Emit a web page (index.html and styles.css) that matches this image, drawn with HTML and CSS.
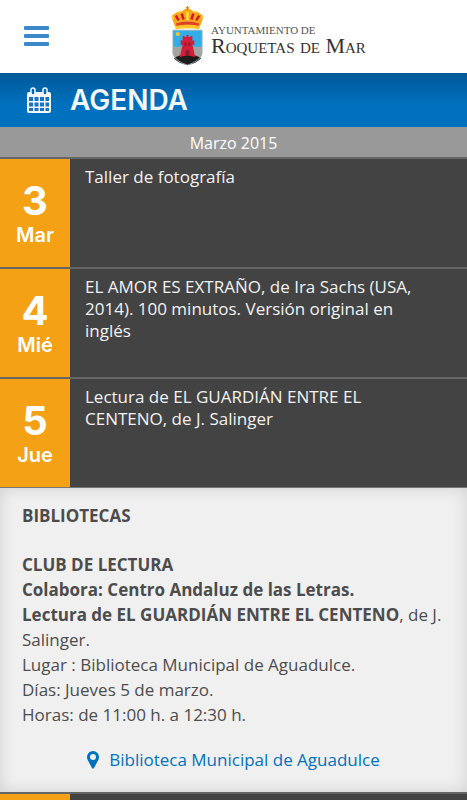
FILE: index.html
```html
<!DOCTYPE html>
<html lang="es">
<head>
<meta charset="utf-8">
<meta name="viewport" content="width=device-width, initial-scale=1">
<title>Agenda - Ayuntamiento de Roquetas de Mar</title>
<link rel="stylesheet" href="styles.css">
</head>
<body>
<header class="top">
  <button class="menu" type="button" aria-label="Menú"><span></span><span></span><span></span></button>
  <a class="brand" href="#">
    <svg class="crest" viewBox="0 0 34 62" aria-hidden="true">
      <!-- crown -->
      <path d="M4 21 1 13Q0 9 4 8 7 5 11 6 13 3 17 3 21 3 23 6 27 5 30 8 34 9 33 13L30 21Q17 25 4 21Z" fill="#f5a81c"/>
      <path d="M5 18Q17 14 29 18L28 21Q17 18 6 21Z" fill="#e0402a"/>
      <path d="M5 10 8 15M11 8 13 14M23 8 21 14M29 10 26 15" stroke="#d8152a" stroke-width="2.6" fill="none"/>
      <path d="M17 6V15" stroke="#ffdc45" stroke-width="2.4"/>
      <path d="M17 0V5M15 2H19" stroke="#d98c12" stroke-width="1.4"/>
      <path d="M4 21Q17 18 30 21L29 24Q17 22 5 24Z" fill="#ffc52b"/>
      <g fill="#ffd43c"><circle cx="2" cy="12" r="1.4"/><circle cx="9" cy="6" r="1.4"/><circle cx="25" cy="6" r="1.4"/><circle cx="32" cy="12" r="1.4"/></g>
      <!-- shield -->
      <path d="M2 25H32V43H2Z" fill="#31aee6"/>
      <path d="M2 42H32V50Q30 57 17 61 4 57 2 50Z" fill="#a5a39e"/>
      <path d="M3 54Q8 50 17 50 26 50 31 54 27 59 17 61 7 59 3 54Z" fill="#1c1c1c"/>
      <circle cx="7" cy="29" r="2.2" fill="#e9c43e"/>
      <path d="M12 33V31H14V32H16V30H18V32H20V31H22V36H23V35H24V40H22L25 53Q17 49 9 53L12 40H10V35H11V36H12Z" fill="#d51c38"/>
      <path d="M15 51V47Q17 44 19 47V51ZM14 38H16V41H14ZM18 38H20V41H18Z" fill="#861b2c"/>
      <path d="M2 25H32V49Q30 57 17 61 4 57 2 49Z" fill="none" stroke="#9eb1b7" stroke-width="1"/>
    </svg>
    <span class="brand-text">
      <span class="brand-small">AYUNTAMIENTO DE</span>
      <span class="brand-name">Roquetas de Mar</span>
    </span>
  </a>
</header>
<main>
  <div class="title">
    <svg class="calendar" viewBox="0 0 26 27" aria-hidden="true">
      <rect x="1" y="5" width="24" height="21" rx="2" fill="#f4f7fc"/>
      <path d="M3 10H7V14H3ZM8.500 10H12.500V14H8.500ZM14 10H18V14H14ZM19.500 10H23V14H19.500ZM3 15.500H7V19.500H3ZM8.500 15.500H12.500V19.500H8.500ZM14 15.500H18V19.500H14ZM19.500 15.500H23V19.500H19.500ZM3 21H7V24H3ZM8.500 21H12.500V24H8.500ZM14 21H18V24H14ZM19.500 21H23V24H19.500Z" fill="#1673bf"/>
      <rect x="5" y="1" width="4" height="7" rx="2" fill="#0768b2" stroke="#f4f7fc" stroke-width="1.5"/>
      <rect x="17" y="1" width="4" height="7" rx="2" fill="#0768b2" stroke="#f4f7fc" stroke-width="1.5"/>
    </svg>
    <h1>AGENDA</h1>
  </div>
  <h2 class="month">Marzo 2015</h2>
  <article class="event">
    <div class="date"><strong>3</strong><span>Mar</span></div>
    <p>Taller de fotografía</p>
  </article>
  <article class="event">
    <div class="date"><strong>4</strong><span>Mié</span></div>
    <p>EL AMOR ES EXTRAÑO, de Ira Sachs (USA, 2014). 100 minutos. Versión original en inglés</p>
  </article>
  <article class="event">
    <div class="date"><strong>5</strong><span>Jue</span></div>
    <p>Lectura de EL GUARDIÁN ENTRE EL CENTENO, de J. Salinger</p>
  </article>
  <section class="detail">
    <h3>BIBLIOTECAS</h3>
    <p><b>CLUB DE LECTURA</b><br>
    <b>Colabora: Centro Andaluz de las Letras.</b><br>
    <b>Lectura de EL GUARDIÁN ENTRE EL CENTENO</b>, de J. Salinger.<br>
    Lugar : Biblioteca Municipal de Aguadulce.<br>
    Días: Jueves 5 de marzo.<br>
    Horas: de 11:00 h. a 12:30 h.</p>
    <a class="place" href="#">
      <svg class="pin" viewBox="0 0 12 18" aria-hidden="true"><path fill-rule="evenodd" d="M6 0A6 6 0 0 0 0 6Q0 8 1 9.500L5 17Q6 18.500 7 17L11 9.500Q12 8 12 6A6 6 0 0 0 6 0ZM6 3A3 3 0 1 1 6 9 3 3 0 0 1 6 3Z" fill="#0071bf"/></svg>
      <span>Biblioteca Municipal de Aguadulce</span>
    </a>
  </section>
  <article class="event">
    <div class="date"></div>
  </article>
</main>
</body>
</html>
```
FILE: styles.css
```css
* {
  box-sizing: border-box;
}

html,
body {
  height: 100%;
}

body {
  display: flex;
  flex-direction: column;
  margin: 0;
  overflow: hidden;
  background: #434343;
  font-family: "Open Sans", sans-serif;
  font-size: 17px;
}

h1, h2, h3, p {
  margin: 0;
}

.top {
  display: flex;
  flex-shrink: 0;
  align-items: center;
  gap: 122px;
  padding: 5px 24px 6px;
  background: #fff;
}

.menu {
  display: flex;
  flex-direction: column;
  gap: 4px;
  width: 25px;
  padding: 0;
  border: 0;
  background: none;
}

.menu span {
  height: 4px;
  border-radius: 1px;
  background: #3b89c9;
}

.brand {
  display: flex;
  align-items: center;
  gap: 7px;
  color: #333;
  text-decoration: none;
  white-space: nowrap;
}

.crest {
  width: 33px;
  height: 62px;
}

.brand-text {
  display: flex;
  flex-direction: column;
  padding-top: 8px;
  font-family: "Liberation Serif", serif;
}

.brand-small {
  color: #555;
  font-size: 11px;
  line-height: 12px;
}

.brand-name {
  font-size: 22px;
  font-variant: small-caps;
  line-height: 20px;
}

main {
  flex: 1;
  min-height: 0;
  overflow: hidden;
}

.title {
  display: flex;
  align-items: center;
  gap: 18px;
  height: 54px;
  padding-left: 26px;
  background: linear-gradient(#005897, #0071bf 60%);
  color: #f4f7fc;
}

.calendar {
  width: 26px;
  height: 27px;
}

.title h1 {
  font-family: Inter, sans-serif;
  font-size: 28px;
  font-weight: 600;
}

.month {
  height: 30px;
  background: #999;
  color: #fff;
  font-size: 16px;
  font-weight: 400;
  line-height: 32px;
  text-align: center;
}

.event {
  display: flex;
  min-height: 110px;
  border-top: 2px solid #666;
  background: #434343;
  color: #f2f2f2;
}

.date {
  display: flex;
  flex-direction: column;
  align-items: center;
  justify-content: center;
  width: 70px;
  padding-top: 4px;
  background: #f4a116;
  color: #fff;
  font-family: Inter, sans-serif;
}

.date strong {
  font-size: 40px;
  line-height: 40px;
}

.date span {
  font-size: 20px;
  font-weight: 600;
  line-height: 28px;
}

.event p {
  flex: 1;
  padding: 7px 48px 7px 15px;
  line-height: 22px;
}

.detail {
  padding: 15px 12px 20px 22px;
  border-top: 1px solid #777;
  background: #f0f0f0;
  box-shadow: inset 0 0 16px #d0d0d0;
  color: #4c4c4c;
  line-height: 25px;
}

.detail h3 {
  margin-bottom: 24px;
  font-size: 17px;
}

.place {
  display: flex;
  align-items: center;
  justify-content: center;
  gap: 10px;
  margin: 20px 10px 0 0;
  color: #0071bf;
  text-decoration: none;
}

.pin {
  width: 12px;
  height: 18px;
}
```
